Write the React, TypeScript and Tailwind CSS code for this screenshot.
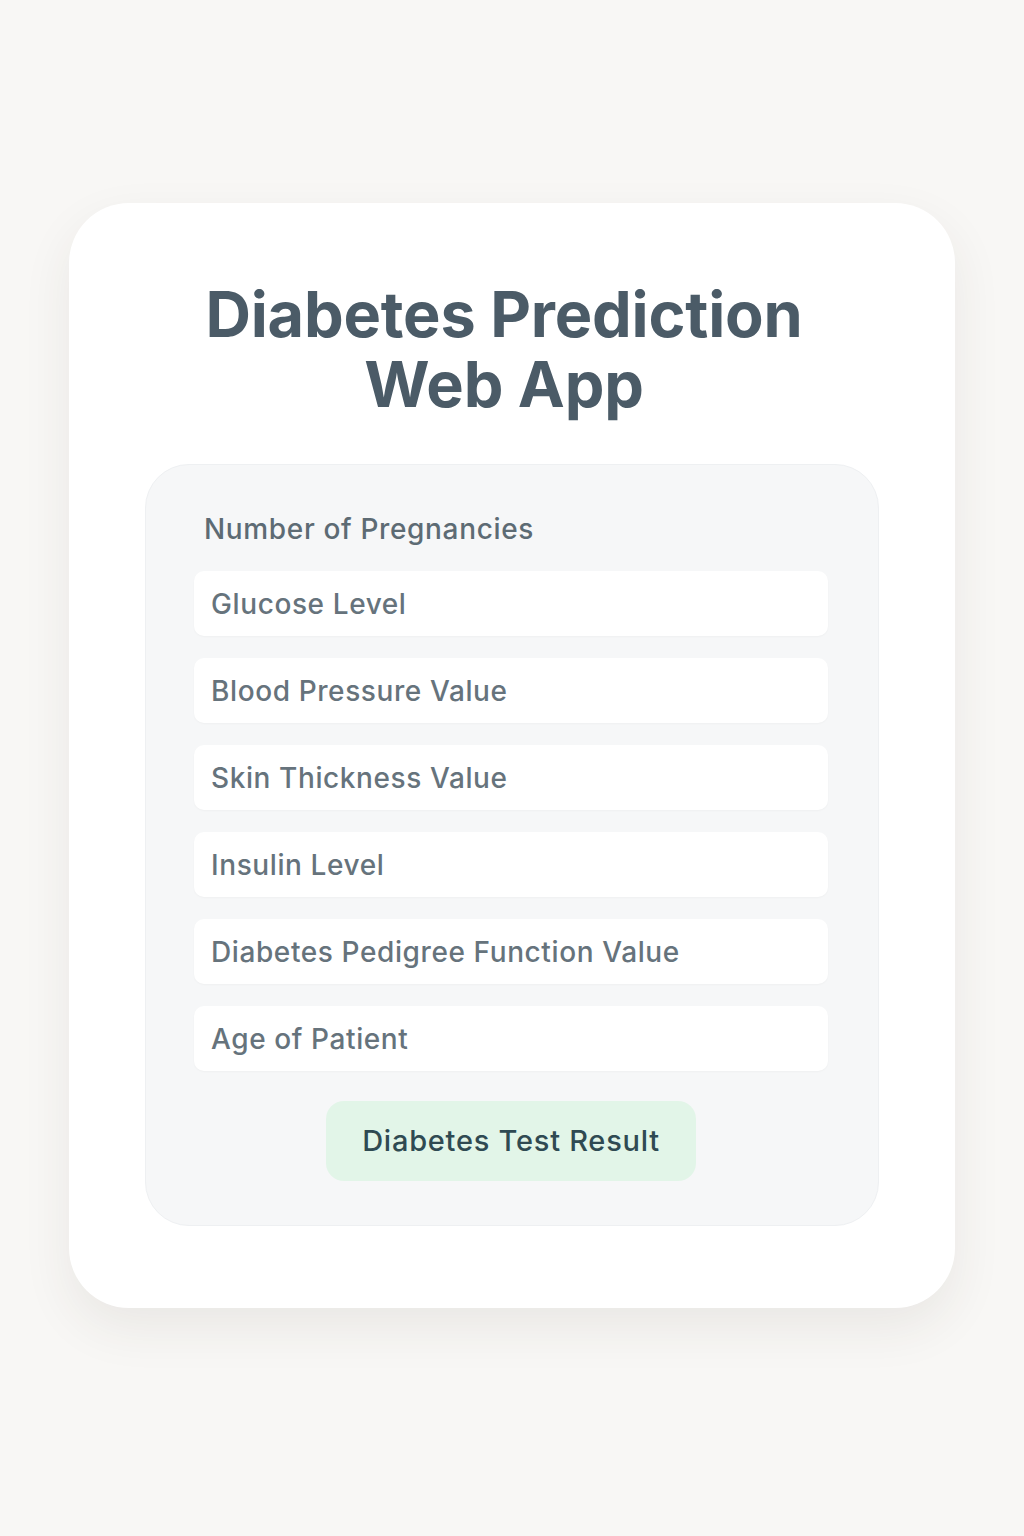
import { useState } from "react";

const fields = [
  "Glucose Level",
  "Blood Pressure Value",
  "Skin Thickness Value",
  "Insulin Level",
  "Diabetes Pedigree Function Value",
  "Age of Patient",
];

export default function App() {
  const [values, setValues] = useState<Record<string, string>>({});

  return (
    <div className="min-h-[1536px] w-full bg-[#f8f7f5] pt-[203px] font-['Inter',sans-serif]">
      <div className="mx-auto w-[886px] rounded-[60px] bg-white px-[76px] pt-[76px] pb-[82px] shadow-[0_20px_50px_rgba(60,50,40,0.08)]">
        {/* Title */}
        <h1 className="pr-[16px] text-center text-[63px] font-bold leading-[70px] tracking-[-0.2px] text-[#4b5b67]">
          Diabetes Prediction
          <br />
          Web App
        </h1>

        {/* Form panel */}
        <div className="mt-[45px] rounded-[44px] border border-[#eef0f2] bg-[#f6f7f8] pl-[48px] pr-[50px] pt-[44px] pb-[44px]">
          <div className="pl-[10px] text-[28px] font-medium leading-[40px] tracking-[0.65px] text-[#5d6b74]">
            Number of Pregnancies
          </div>

          <div className="mt-[22px] flex flex-col gap-[22px]">
            {fields.map((f) => (
              <input
                key={f}
                value={values[f] ?? ""}
                onChange={(e) => setValues((p) => ({ ...p, [f]: e.target.value }))}
                placeholder={f}
                className="h-[65px] w-full rounded-[10px] bg-white px-[17px] text-[28px] font-medium tracking-[0.6px] text-[#5d6b74] shadow-[0_1px_2px_rgba(0,0,0,0.03)] outline-none placeholder:text-[#66737c]"
              />
            ))}
          </div>

          <div className="mt-[30px] flex justify-center">
            <button className="h-[80px] w-[370px] rounded-[18px] bg-[#e2f5e8] text-[29px] font-medium tracking-[0.75px] text-[#2f4a52]">
              Diabetes Test Result
            </button>
          </div>
        </div>
      </div>
    </div>
  );
}
